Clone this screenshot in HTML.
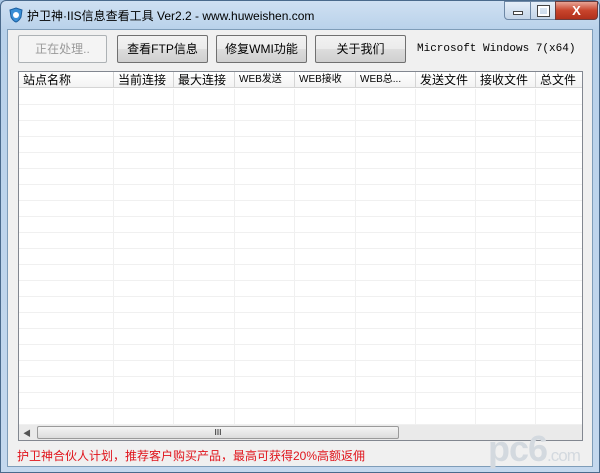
<html><head><style>
body{margin:0;width:600px;height:473px;overflow:hidden;background:#a9c6e4;font-family:"Liberation Sans","Noto Sans CJK SC",sans-serif;position:relative}
.frame{position:absolute;left:0;top:0;width:598px;height:471px;border:1px solid #4a6a8c;border-radius:6px 6px 0 0;background:linear-gradient(#cfe0f2,#b8d1ea 30px,#c4d8ee)}
.client{position:absolute;left:7px;top:29px;width:584px;height:436px;background:#f0f0f0;border:1px solid #7f9db9}
.t{position:absolute;left:26px;top:6px;font-size:12px;color:#000}
.btn{position:absolute;top:35px;height:26px;border:1px solid #707070;border-radius:2px;background:linear-gradient(#f2f2f2,#ebebeb 50%,#dddddd 51%,#cfcfcf);font-size:12px;text-align:center;line-height:26px;color:#000}
.grid{position:absolute;left:18px;top:71px;width:563px;height:368px;border:1px solid #828790;background:#fff;overflow:hidden}
.hd{position:absolute;top:0;height:16px;border-right:1px solid #d5d5d5;border-bottom:1px solid #d5d5d5;font-size:12px;line-height:16px;padding-left:4px;box-sizing:border-box;background:linear-gradient(#fff,#f3f3f3);white-space:nowrap;overflow:hidden}
.vl{position:absolute;top:17px;width:1px;height:336px;background:#f0f0f0}
.rows{position:absolute;left:0;top:17px;width:100%;height:336px;background:repeating-linear-gradient(#fff 0 15px,#f0f0f0 15px 16px)}
.sb{position:absolute;left:0;top:353px;width:563px;height:15px;background:#eaeaea}
</style></head><body>
<div class="frame">
<svg style="position:absolute;left:8px;top:6px" width="14" height="16"><path d="M7 1 L13 3 L12 10 Q10 14 7 15 Q4 14 2 10 L1 3 Z" fill="#3a8fd6" stroke="#1c5fa0"/><circle cx="7" cy="8" r="3" fill="#fff"/></svg>
<div class="t">护卫神·IIS信息查看工具 Ver2.2 - www.huweishen.com</div>
<div style="position:absolute;left:503px;top:0;width:25px;height:17px;border:1px solid #6d87a5;border-radius:0 0 0 4px;background:linear-gradient(#e5eef8,#c4d5e8)"><div style="position:absolute;left:8px;top:9px;width:8px;height:2px;background:#fff;border:1px solid #444"></div></div>
<div style="position:absolute;left:529px;top:0;width:24px;height:17px;border:1px solid #6d87a5;background:linear-gradient(#e5eef8,#c4d5e8)"><div style="position:absolute;left:7px;top:4px;width:7px;height:6px;border:2px solid #fff;outline:1px solid #444"></div></div>
<div style="position:absolute;left:554px;top:0;width:41px;height:17px;border:1px solid #6d3b3b;border-radius:0 0 4px 0;background:linear-gradient(#e8a495,#c8442c 50%,#b0301c);color:#fff;font-weight:bold;font-size:13px;text-align:center;line-height:17px">X</div>
</div>
<div class="client"></div>
<div class="btn" style="left:18px;width:87px;color:#9a9a9a;background:#f4f4f4;border-color:#adb2b5">正在处理..</div>
<div class="btn" style="left:117px;width:89px">查看FTP信息</div>
<div class="btn" style="left:216px;width:89px">修复WMI功能</div>
<div class="btn" style="left:315px;width:89px">关于我们</div>
<div style="position:absolute;left:417px;top:43px;font-size:11px;font-family:'Liberation Mono',monospace">Microsoft Windows 7(x64)</div>
<div class="grid">
<div class="rows"></div>
<div class="vl" style="left:94px"></div><div class="vl" style="left:154px"></div><div class="vl" style="left:215px"></div><div class="vl" style="left:275px"></div><div class="vl" style="left:336px"></div><div class="vl" style="left:396px"></div><div class="vl" style="left:456px"></div><div class="vl" style="left:516px"></div>
<div class="hd" style="left:0;width:95px">站点名称</div>
<div class="hd" style="left:95px;width:60px">当前连接</div>
<div class="hd" style="left:155px;width:61px">最大连接</div>
<div class="hd" style="left:216px;width:60px;font-size:10px">WEB发送</div>
<div class="hd" style="left:276px;width:61px;font-size:10px">WEB接收</div>
<div class="hd" style="left:337px;width:60px;font-size:10px">WEB总...</div>
<div class="hd" style="left:397px;width:60px">发送文件</div>
<div class="hd" style="left:457px;width:60px">接收文件</div>
<div class="hd" style="left:517px;width:60px">总文件</div>
<div class="sb"><div style="position:absolute;left:4px;top:3px;font-size:8px;color:#555">◀</div><div style="position:absolute;left:18px;top:1px;width:360px;height:11px;border:1px solid #9a9a9a;border-radius:2px;background:linear-gradient(#f4f4f4,#dcdcdc);text-align:center;font-size:8px;line-height:11px">III</div></div>
</div>
<div style="position:absolute;left:17px;top:447px;font-size:12px;color:#e0141c">护卫神合伙人计划，推荐客户购买产品，最高可获得20%高额返佣</div>
<div style="position:absolute;left:488px;top:428px;font-size:36px;font-weight:bold;color:#d3d9df;letter-spacing:-1px">pc6<span style="font-size:17px;font-weight:normal">.com</span></div>
</body></html>
